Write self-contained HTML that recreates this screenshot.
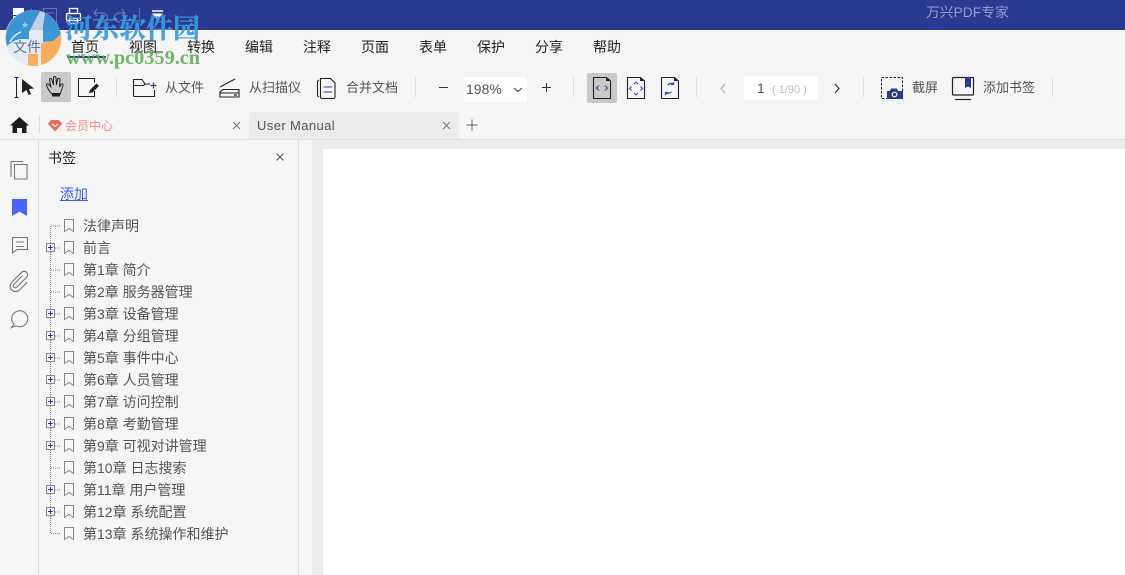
<!DOCTYPE html>
<html><head><meta charset="utf-8">
<style>
html,body{margin:0;padding:0}
body{width:1125px;height:575px;position:relative;overflow:hidden;background:#f5f5f5;font-family:"Liberation Sans","Noto Sans CJK SC",sans-serif;color:#333}
.a{position:absolute}
.t{position:absolute;white-space:nowrap;font-size:13px;line-height:18px}
.m{position:absolute;white-space:nowrap;font-size:14px;line-height:18px;top:38px;color:#222}
.b{position:absolute;white-space:nowrap;font-size:13px;line-height:18px;top:79px;color:#555}
.r{position:absolute;left:83px;white-space:nowrap;font-size:14px;line-height:18px;color:#555}
.v{position:absolute;width:1px;height:20px;top:77px;background:#dcdcdc}
svg{position:absolute;overflow:visible}
</style></head><body>
<div class="a" style="left:0;top:0;width:1125px;height:30px;background:#2b3990"></div>
<div class="t" style="left:926px;top:4px;font-size:13.800px;color:#8f9bd3">万兴PDF专家</div>

<svg style="left:0;top:0" width="210" height="30" fill="none" stroke="#fff">
<rect x="13" y="8" width="11" height="7" fill="#fff" stroke="none"/>
<rect x="13" y="16" width="11" height="4" fill="#fff" stroke="none"/>
<path d="M31.500 8v12" stroke="#5d66a8"/>
<rect x="43.500" y="8.500" width="13" height="15" stroke="#6a72b0"/>
<path d="M46 13h8" stroke="#6a72b0"/>
<rect x="66.500" y="13.500" width="14" height="7" rx="1" stroke-width="1.300"/>
<rect x="69.500" y="8.500" width="8" height="5" stroke-width="1.300"/>
<rect x="69.500" y="18.500" width="8" height="5" stroke-width="1.300"/>
<path d="M94 13h9a4.500 4.500 0 0 1 0 9h-1M94 13l3-4M94 13l3 3" stroke="#7a82bd"/>
<path d="M125 13h-6a4.500 4.500 0 0 0 0 9h1M125 13l-3-4M125 13l-3 3" stroke="#7a82bd"/>
<path d="M139.500 8v12" stroke="#5d66a8"/>
<path d="M152 11h11" stroke-width="1.500"/><path d="M152 13.500h11l-5.500 6z" fill="#fff" stroke="none"/>
</svg>

<div class="m" style="left:71px">首页</div>
<div class="a" style="left:67px;top:56px;width:39px;height:2px;background:#2b3990"></div>
<div class="m" style="left:129px">视图</div>
<div class="m" style="left:187px">转换</div>
<div class="m" style="left:245px">编辑</div>
<div class="m" style="left:303px">注释</div>
<div class="m" style="left:361px">页面</div>
<div class="m" style="left:419px">表单</div>
<div class="m" style="left:477px">保护</div>
<div class="m" style="left:535px">分享</div>
<div class="m" style="left:593px">帮助</div>

<!-- watermark -->
<svg style="left:5px;top:10px" width="56" height="56">
<circle cx="28" cy="28" r="28" fill="#dfe8f1" opacity=".85"/>
<path d="M2 36A28 28 0 0 1 28 0a28 28 0 0 1 7 1L24 22v7H15C10 30 5 33 2 36z" fill="#2f8fcf" opacity=".92"/>
<path d="M40 3A28 28 0 0 1 56 27l-7 4-11 1V16z" fill="#2f8fcf" opacity=".92"/>
<path d="M56 24A28 28 0 0 1 36 55V33l12-2z" fill="#f6ae5c"/>
<path d="M23 44h10v12h-5a28 28 0 0 1-5-1z" fill="#f6ae5c"/>
<path d="M16 22c-5 2-9 6-11 10" fill="none" stroke="#fff" stroke-width="1.500" opacity=".8"/>
<text x="16" y="18" font-size="9" fill="#a8cfee" font-family="DejaVu Sans">★</text>
</svg>
<div class="m" style="left:13px;color:#5a6fa8">文件</div>
<div class="t" style="left:65px;top:11px;font-size:27px;line-height:36px;font-weight:bold;color:#3c9be0;font-family:'Liberation Serif','Noto Serif CJK SC',serif;opacity:.92;-webkit-text-stroke:.4px #3c9be0">河东软件园</div>
<div class="t" style="left:66px;top:47px;font-size:20.300px;line-height:22px;font-weight:bold;color:#5fae57;font-family:'Liberation Serif',serif;opacity:.9">www.pc0359.cn</div>

<!-- toolbar -->
<div class="a" style="left:41px;top:72px;width:30px;height:30px;background:#c9c9c9;border-radius:2px"></div>
<svg style="left:0;top:70px" width="110" height="40" fill="none" stroke="#222" stroke-width="1">
<path d="M14.500 7.500h4M14.500 27.500h4M16.500 7.500v20"/>
<path d="M22 9l12 9.500-5 .5 2 5-2.500 1-2-5-4.500 3z" fill="#222" stroke="none"/>
<path d="M52 24C49 21 47 17 46.500 15c0-1.500 1.500-1.500 2.500-.5l2 3L49.500 10c0-2 2-2 2.500 0l1.500 5V8c0-2 2.500-2 2.500 0l.5 7 1-5.500c.5-2 2.500-1.500 2.500.5l-.5 7 1.500-2.500c1-1.500 2.500-.5 2 1l-2 6-1 3"/>
<path d="M52 23h8v3.500h-8z" fill="#222" stroke="none"/>
<path d="M94.500 12.500V8.500H78.500v18h16V21"/>
<path d="M89 23l1-3 6.500-6.500 2.500 2.500-6.500 6.500z" fill="#222" stroke="none"/>
</svg>
<div class="v" style="left:116px"></div>
<svg style="left:130px;top:76px" width="170" height="26" fill="none" stroke="#222" stroke-width="1.100">
<path d="M3.500 20V3.500H12l3 4.500h5M3.500 9.500h10l2-1.500M3.500 20.500h21V14"/>
<path d="M23.500 6.500v6M20.500 9.500h6" stroke="#2b3990" stroke-width="1.200"/>
<path d="M90 11L105 3M90 16l3-2.500h16v7.500H90zM90 17h19"/>
<path d="M104 19h3" stroke-width="1.300"/>
</svg>
<div class="b" style="left:165px">从文件</div>
<div class="b" style="left:249px">从扫描仪</div>
<svg style="left:316px;top:77px" width="22" height="24" fill="none" stroke="#222" stroke-width="1.100">
<path d="M3 3C2 3.500 1.500 4 1.500 5v13c0 1 .5 1.500 1.500 2"/>
<path d="M4.500 1.500h10l4.500 4.500v14c0 1-.5 1.500-1.500 1.500H6c-1 0-1.500-.5-1.500-1.500z"/>
<path d="M7.500 10h8.500M7.500 15h8.500" stroke="#2b3990"/>
</svg>
<div class="b" style="left:346px">合并文档</div>
<div class="v" style="left:415px"></div>
<div class="a" style="left:439px;top:87px;width:9px;height:1px;background:#333"></div>
<div class="a" style="left:464px;top:77px;width:63px;height:25px;background:#fff;border-radius:2px"></div>
<div class="t" style="left:466px;top:80px;font-size:14px;color:#555">198%</div>
<svg style="left:513px;top:86px" width="10" height="8" fill="none" stroke="#444" stroke-width="1.100"><path d="M1 2l4 3.500L9 2"/></svg>
<div class="a" style="left:542px;top:87px;width:9px;height:1px;background:#333"></div>
<div class="a" style="left:546px;top:83px;width:1px;height:9px;background:#333"></div>
<div class="v" style="left:573px"></div>
<div class="a" style="left:587px;top:73px;width:30px;height:30px;background:#c9c9c9;border-radius:2px"></div>
<svg style="left:590px;top:75px" width="100" height="28" fill="none" stroke="#222" stroke-width="1.100">
<path d="M3.500 2.500h13l4 3.500v17.500H3.500z"/><path d="M16 2l5 4h-5z" fill="#222" stroke="none"/>
<path d="M9 10.500l-2.500 2.500L9 15.500M15 10.500l2.500 2.500L15 15.500" stroke="#3f4ea6"/>
<path d="M37.500 2.500h13l4 3.500v17.500h-17z"/><path d="M50 2l5 4h-5z" fill="#222" stroke="none"/>
<path d="M44 9l2-2 2 2M44 18l2 2 2-2M41.500 11.500l-2 2 2 2M50.500 11.500l2 2-2 2" stroke="#3f4ea6"/>
<path d="M71.500 2.500h13l4 3.500v17.500h-17z"/><path d="M84 2l5 4h-5z" fill="#222" stroke="none"/>
<path d="M77.500 10c2-1.500 4-2 5.500-1M83.500 7v2.500H81M81.500 17c-2 1.500-4 2-6 1M75.500 20v-2.500H78" stroke="#3f4ea6" stroke-width="1.300"/>
</svg>
<div class="v" style="left:696px"></div>
<svg style="left:718px;top:82px" width="130" height="14" fill="none" stroke-width="1.200">
<path d="M7 2L3 6.500 7 11" stroke="#b5b5b5"/>
<path d="M117 2l4 4.500-4 4.500" stroke="#333"/>
</svg>
<div class="a" style="left:744px;top:76px;width:74px;height:24px;background:#fff;border-radius:2px"></div>
<div class="t" style="left:757px;top:79px;font-size:14px;color:#555">1</div>
<div class="t" style="left:772px;top:82px;font-size:11px;line-height:16px;color:#bbb">( 1/90 )</div>
<div class="v" style="left:863px"></div>
<svg style="left:880px;top:76px" width="95" height="26" fill="none" stroke="#222" stroke-width="1">
<rect x="1.500" y="1.500" width="21" height="21" stroke-dasharray="2.500 1.500"/>
<path d="M7 23v-8h3l1-2.500h6l1 2.500h5v8z" fill="#2b3990" stroke="none"/>
<circle cx="14.500" cy="18.500" r="2.300" fill="#2b3990" stroke="#fff" stroke-width="1.200"/>
<rect x="72.500" y="1.500" width="21" height="17.500" rx="1" stroke-width="1.200"/>
<path d="M85 1h6v11l-3-1.500-3 1.500z" fill="#2b3990" stroke="none"/>
<path d="M75 23.500h16" stroke-width="1.200"/>
</svg>
<div class="b" style="left:912px">截屏</div>
<div class="b" style="left:983px">添加书签</div>
<div class="v" style="left:1052px"></div>

<!-- tabs -->
<div class="a" style="left:0;top:139px;width:1125px;height:1px;background:#dedede"></div>
<svg style="left:10px;top:116px" width="20" height="18"><path d="M9.500 1L19 9.500h-2.500V17H12v-5H7v5H2.500V9.500H0z" fill="#1c1c1c"/></svg>
<div class="a" style="left:39px;top:116px;width:1px;height:18px;background:#dcdcdc"></div>
<svg style="left:48px;top:120px" width="14" height="12"><path d="M3 0h8l3 4-7 7.500L0 4z" fill="#ef6a5a"/><path d="M4 4l3 2.500L10 4" fill="none" stroke="#fff" stroke-width="1.200"/></svg>
<div class="t" style="left:65px;top:117px;font-size:12px;color:#f58f82">会员中心</div>
<svg style="left:232px;top:121px" width="9" height="9" stroke="#777" stroke-width="1"><path d="M1 1l7 7M8 1L1 8"/></svg>
<div class="a" style="left:249px;top:112px;width:210px;height:27px;background:#ebebeb;border-radius:4px 4px 0 0"></div>
<div class="t" style="left:257px;top:117px;font-size:13px;color:#555;letter-spacing:.4px">User Manual</div>
<svg style="left:442px;top:121px" width="9" height="9" stroke="#777" stroke-width="1"><path d="M1 1l7 7M8 1L1 8"/></svg>
<svg style="left:466px;top:119px" width="12" height="12" stroke="#666" stroke-width="1"><path d="M.5 6h11M6 .5v11"/></svg>

<!-- main -->
<div class="a" style="left:38px;top:140px;width:1px;height:435px;background:#dcdcdc"></div>
<div class="a" style="left:298px;top:140px;width:1px;height:435px;background:#dcdcdc"></div>
<div class="a" style="left:312px;top:140px;width:813px;height:435px;background:#ebebeb"></div>
<div class="a" style="left:323px;top:149px;width:802px;height:426px;background:#fff"></div>

<svg style="left:9px;top:160px" width="22" height="170" fill="none" stroke="#777" stroke-width="1.100">
<path d="M5.500 4.500H18V19H5.500zM2 17V1.500h12"/>
<path d="M3 39h15v17l-7.500-4.500L3 56z" fill="#4a63ff" stroke="none"/>
<path d="M3.500 77.500h15v12H8l-4.500 3.500zM7 82h8M7 86.500h8"/>
<path transform="translate(10.500 121.500) rotate(45)" d="M-2-6V6a2 2 0 0 0 4 0V-8a3.500 3.500 0 0 0-7 0V6a5.500 5.500 0 0 0 11 0V-5"/>
<path d="M5 164.300a8 8 0 1 1 2 1.500L2.500 167.500z"/>
</svg>

<div class="t" style="left:48px;top:149px;font-size:14px;color:#222">书签</div>
<svg style="left:276px;top:153px" width="8" height="8" stroke="#555" stroke-width="1"><path d="M.5.500l7 7M7.500.500l-7 7"/></svg>
<div class="t" style="left:60px;top:185px;font-size:14px;color:#3d5afe;text-decoration:underline">添加</div>

<svg style="left:44px;top:218px" width="34" height="330" fill="none">
<path d="M6.500 8V315.500H17" stroke="#888" stroke-dasharray="1 1"/>
<g stroke="#888" stroke-dasharray="1 1">
<path d="M7 8h10M7 52h10M7 74h10M7 250h10"/>
<path d="M11 30h6M11 96h6M11 118h6M11 140h6M11 162h6M11 184h6M11 206h6M11 228h6M11 272h6M11 294h6"/>
</g>
<g>
<g stroke="#8a8a8a" fill="#f5f5f5">
<rect x="2.500" y="25.500" width="8" height="8"/><rect x="2.500" y="91.500" width="8" height="8"/><rect x="2.500" y="113.500" width="8" height="8"/><rect x="2.500" y="135.500" width="8" height="8"/><rect x="2.500" y="157.500" width="8" height="8"/><rect x="2.500" y="179.500" width="8" height="8"/><rect x="2.500" y="201.500" width="8" height="8"/><rect x="2.500" y="223.500" width="8" height="8"/><rect x="2.500" y="267.500" width="8" height="8"/><rect x="2.500" y="289.500" width="8" height="8"/>
</g>
<path stroke="#2b3990" d="M4 29.500h5M6.500 27v5M4 95.500h5M6.500 93v5M4 117.500h5M6.500 115v5M4 139.500h5M6.500 137v5M4 161.500h5M6.500 159v5M4 183.500h5M6.500 181v5M4 205.500h5M6.500 203v5M4 227.500h5M6.500 225v5M4 271.500h5M6.500 269v5M4 293.500h5M6.500 291v5"/>
</g>
<g stroke="#888">
<path d="M20.500 1.500h9v12l-4.500-3-4.500 3z"/><path d="M20.500 23.500h9v12l-4.500-3-4.500 3z"/><path d="M20.500 45.500h9v12l-4.500-3-4.500 3z"/><path d="M20.500 67.500h9v12l-4.500-3-4.500 3z"/><path d="M20.500 89.500h9v12l-4.500-3-4.500 3z"/><path d="M20.500 111.500h9v12l-4.500-3-4.500 3z"/><path d="M20.500 133.500h9v12l-4.500-3-4.500 3z"/><path d="M20.500 155.500h9v12l-4.500-3-4.500 3z"/><path d="M20.500 177.500h9v12l-4.500-3-4.500 3z"/><path d="M20.500 199.500h9v12l-4.500-3-4.500 3z"/><path d="M20.500 221.500h9v12l-4.500-3-4.500 3z"/><path d="M20.500 243.500h9v12l-4.500-3-4.500 3z"/><path d="M20.500 265.500h9v12l-4.500-3-4.500 3z"/><path d="M20.500 287.500h9v12l-4.500-3-4.500 3z"/><path d="M20.500 309.500h9v12l-4.500-3-4.500 3z"/>
</g>
</svg>

<div class="r" style="top:217px">法律声明</div>
<div class="r" style="top:239px">前言</div>
<div class="r" style="top:261px">第1章 简介</div>
<div class="r" style="top:283px">第2章 服务器管理</div>
<div class="r" style="top:305px">第3章 设备管理</div>
<div class="r" style="top:327px">第4章 分组管理</div>
<div class="r" style="top:349px">第5章 事件中心</div>
<div class="r" style="top:371px">第6章 人员管理</div>
<div class="r" style="top:393px">第7章 访问控制</div>
<div class="r" style="top:415px">第8章 考勤管理</div>
<div class="r" style="top:437px">第9章 可视对讲管理</div>
<div class="r" style="top:459px">第10章 日志搜索</div>
<div class="r" style="top:481px">第11章 用户管理</div>
<div class="r" style="top:503px">第12章 系统配置</div>
<div class="r" style="top:525px">第13章 系统操作和维护</div>
</body></html>
